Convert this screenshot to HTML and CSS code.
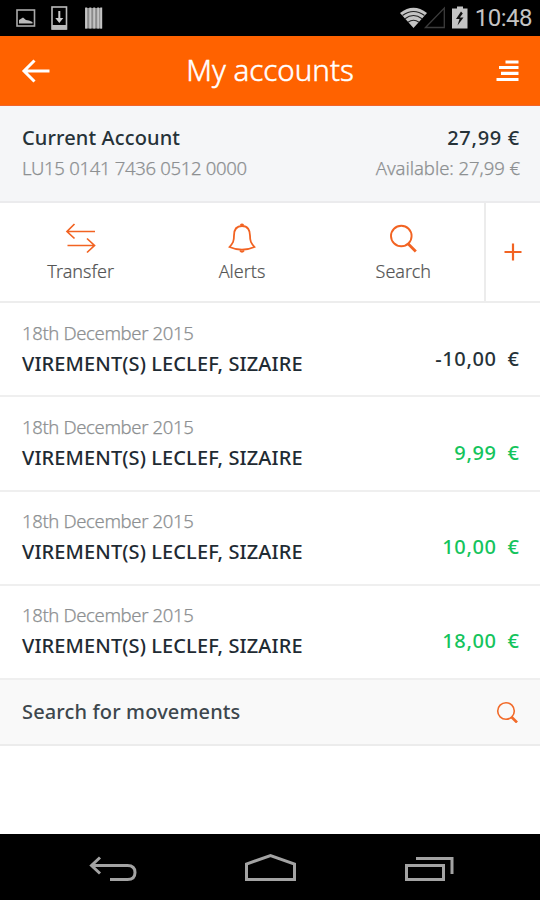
FILE: index.html
```
<!DOCTYPE html>
<html lang="en">
<head>
<meta charset="utf-8">
<title>My accounts</title>
<link rel="stylesheet" href="styles.css">
</head>
<body>
<div class="screen">
  <div class="status">
    <svg width="110" height="36" viewBox="0 0 110 36" aria-hidden="true">
      <rect x="17" y="10" width="17.500" height="16" fill="none" stroke="#aaa" stroke-width="1.600"/>
      <path d="M19 23.500V20l4-2.500 3 2.500 3 .5 3.500 1.500v1.500z" fill="#bbb"/>
      <rect x="52" y="7" width="14.500" height="22" fill="none" stroke="#bbb" stroke-width="1.600"/>
      <rect x="52" y="25" width="14.500" height="4.500" fill="#bbb"/>
      <path d="M59.300 11v8" stroke="#ccc" stroke-width="2"/><path d="M55.300 18h8l-4 5z" fill="#ccc"/>
      <rect x="85" y="8" width="17" height="20.500" fill="#8a8a8a"/>
      <path d="M86.200 7.500v21M90.300 7.500v21M94.200 7.500v21M98.200 7.500v21M101.200 7.500v21" stroke="#c4c4c4" stroke-width="2"/>
    </svg>
    <div class="status-right">
      <svg width="75" height="36" viewBox="395 0 75 36" aria-hidden="true">
        <path d="M400 13Q413.500 2.500 427 13L413.500 28z" fill="#c4c4c4"/>
        <path d="M402.500 15.500q11-8 22 0M405 18.800q8.500-6.500 17 0M408 22.300q5.500-4 11 0" fill="none" stroke="#222" stroke-width="1.100"/>
        <path d="M425.500 27.500L444.300 8v19.500z" fill="none" stroke="#3c3c3c" stroke-width="1.300"/>
        <path d="M452 8.500h5V6.500h6v2h4.500v20H452z" fill="#c4c4c4"/>
        <path d="M461 11.500l-5 7.500h3.500l-2 6.500 6-8h-3.700l3-4z" fill="#111"/>
      </svg>
      <span class="clock">10:48</span>
    </div>
  </div>
  <header class="bar">
    <svg width="30" height="26" viewBox="0 0 30 26" aria-hidden="true"><path d="M28.500 13H2.500M13.500 2.500L3 13l10.500 10.500" fill="none" stroke="#fff" stroke-width="3"/></svg>
    <h1 class="title">My accounts</h1>
    <svg width="23" height="22" viewBox="0 0 23 22" aria-hidden="true"><path d="M9.500 2H22.500M3 7.500H22.500M5 13.300H22.500M.5 19.500H22.500" stroke="#fff" stroke-width="3.200"/></svg>
  </header>
  <section class="account">
    <div class="line"><b class="name">Current Account</b><b class="balance">27,99 €</b></div>
    <div class="line sub"><span class="iban">LU15 0141 7436 0512 0000</span><span class="avail">Available: 27,99 €</span></div>
  </section>
  <nav class="actions">
    <div class="action">
      <svg width="32" height="32" viewBox="0 0 32 32" fill="none" stroke="#f26322" stroke-width="1.700"><path d="M30 9.500H2.500M9.500 2L2 9.500l7.500 7M2.500 23.500h27M22 16.500L29.500 23.500l-7.500 7"/></svg>
      <span>Transfer</span>
    </div>
    <div class="action">
      <svg width="32" height="32" viewBox="0 0 32 32" fill="none" stroke="#f26322" stroke-width="1.800"><path d="M16 4C10 4 8 8.500 8 13.500c0 6-1 7.500-4.500 11.500Q16 30.500 28.500 25C25 21 24 19.500 24 13.500 24 8.500 22 4 16 4z"/><path d="M14.500 3.500q1.500-2 3 0M14 28.500q2 2.500 4 0"/></svg>
      <span>Alerts</span>
    </div>
    <div class="action">
      <svg width="32" height="32" viewBox="0 0 32 32" fill="none" stroke="#f26322"><circle cx="14.300" cy="14" r="10.300" stroke-width="1.900"/><path d="M20.800 21.500l8 8" stroke-width="2.800"/></svg>
      <span>Search</span>
    </div>
    <div class="more"><svg width="18" height="18" viewBox="0 0 18 18" stroke="#f26322" stroke-width="2.200"><path d="M9 .5v17M.5 9h17"/></svg></div>
  </nav>
  <ul class="moves">
    <li class="move"><div><div class="date">18th December 2015</div><div class="desc">VIREMENT(S) LECLEF, SIZAIRE</div></div><div class="amount neg"><span>-10,00</span><span>€</span></div></li>
    <li class="move"><div><div class="date">18th December 2015</div><div class="desc">VIREMENT(S) LECLEF, SIZAIRE</div></div><div class="amount"><span>9,99</span><span>€</span></div></li>
    <li class="move"><div><div class="date">18th December 2015</div><div class="desc">VIREMENT(S) LECLEF, SIZAIRE</div></div><div class="amount"><span>10,00</span><span>€</span></div></li>
    <li class="move"><div><div class="date">18th December 2015</div><div class="desc">VIREMENT(S) LECLEF, SIZAIRE</div></div><div class="amount"><span>18,00</span><span>€</span></div></li>
  </ul>
  <div class="find"><span>Search for movements</span>
    <svg width="24" height="24" viewBox="0 0 24 24" fill="none" stroke="#f26b2a"><circle cx="10" cy="12" r="8.300" stroke-width="1.600"/><path d="M15.500 18l5.500 5.500" stroke-width="2.600"/></svg>
  </div>
  <div class="blank"></div>
  <footer class="softkeys">
    <svg width="540" height="66" viewBox="0 834 540 66" fill="none" stroke="#a3a3a3" stroke-width="3" aria-hidden="true">
      <path d="M100 857.500L91.500 865.500l8.500 8M92 865.500h35.500q7.500 0 7.500 7t-7.500 7H110"/>
      <path d="M246.500 879.500v-15.500L270.500 855.500l24 8.500v15.500z"/>
      <path d="M406.500 865.500h37v14h-37zM416 858.500h36v15.500"/>
    </svg>
  </footer>
</div>
</body>
</html>
```
FILE: styles.css
```
* { box-sizing: border-box; }
body { margin: 0; background: #fff; font-family: "Noto Sans", "Open Sans", sans-serif; }
.screen { width: 540px; height: 900px; display: flex; flex-direction: column; overflow: hidden; }
.screen svg { display: block; flex: none; }
.status { height: 36px; background: #000; display: flex; justify-content: space-between; }
.status-right { display: flex; padding-right: 8px; }
.status-right svg { margin-right: -1px; }
.clock { font: 400 24px/37px Roboto, sans-serif; color: #c4c4c4; margin-left: 6px; letter-spacing: -.5px; }
.bar { height: 70px; background: #ff6200; border-bottom: 1px solid #f0652c; display: flex; align-items: center; justify-content: space-between; padding: 0 21px; }
.title { margin: 0; font-size: 29.5px; font-weight: 300; line-height: 40px; padding: 0 7px 2px 0; color: #fff; -webkit-text-stroke: .5px #fff; }
.account { height: 97px; background: #f5f6f8; border-bottom: 2px solid #ebebed; padding: 17px 20px 0 22px; }
.line { display: flex; justify-content: space-between; font-size: 20px; line-height: 30px; color: #263238; }
.line b { font-weight: 500; }
.line .name { letter-spacing: .12px; }
.line .balance { letter-spacing: .7px; }
.line.sub { font-size: 18.5px; font-weight: 300; color: #8d9092; -webkit-text-stroke: .25px #8d9092; }
.iban { letter-spacing: -.3px; }
.avail { letter-spacing: -.05px; }
.actions { height: 100px; display: grid; grid-template-columns: repeat(3, 161.330px) 1fr; border-bottom: 2px solid #ededed; }
.action { display: flex; flex-direction: column; align-items: center; padding-top: 19px; font-size: 18px; line-height: 34px; font-weight: 300; color: #555; -webkit-text-stroke: .2px #555; }
.more { border-left: 2px solid #ececec; display: flex; align-items: center; justify-content: center; }
.moves { list-style: none; margin: 0; padding: 0; }
.move { height: 94.250px; border-bottom: 2px solid #efefef; display: flex; justify-content: space-between; align-items: flex-start; padding: 14.500px 20px 0 22px; }
.date { font-size: 18.5px; font-weight: 300; line-height: 30px; letter-spacing: -.36px; color: #8d9092; -webkit-text-stroke: .25px #8d9092; }
.desc { font-size: 20px; font-weight: 500; line-height: 32.500px; letter-spacing: .1px; color: #1f2b33; }
.amount { display: flex; gap: 11px; font-size: 20px; font-weight: 500; line-height: 30px; padding: 26px 1px 0 0; color: #14c45c; }
.amount span:first-child { letter-spacing: .6px; }
.amount.neg { color: #263238; }
.find { height: 66px; background: #f9f9f9; border-bottom: 2px solid #ececec; display: flex; justify-content: space-between; align-items: center; padding: 0 20px 2px 22px; font-size: 20px; font-weight: 500; letter-spacing: .14px; color: #3d474d; }
.blank { flex: 1; }
.softkeys { height: 66px; background: #000; }
```
